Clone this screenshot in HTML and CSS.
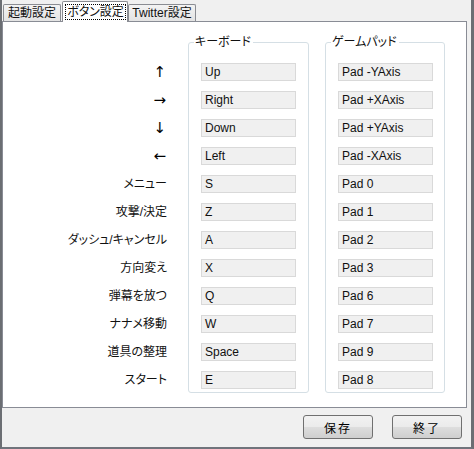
FILE: index.html
```html
<!DOCTYPE html>
<html lang="ja">
<head>
<meta charset="utf-8">
<link rel="stylesheet" href="styles.css">
</head>
<body>
<div class="window">
  <div class="tabs">
    <div class="tab tab-first">起動設定</div>
    <div class="tab tab-active"><span class="focus">ボタン設定</span></div>
    <div class="tab tab-last">Twitter設定</div>
  </div>
  <div class="panel">
    <div class="labels">
      <div class="label arrow">↑</div>
      <div class="label arrow">→</div>
      <div class="label arrow">↓</div>
      <div class="label arrow">←</div>
      <div class="label">メニュー</div>
      <div class="label">攻撃/決定</div>
      <div class="label">ダッシュ/キャンセル</div>
      <div class="label">方向変え</div>
      <div class="label">弾幕を放つ</div>
      <div class="label">ナナメ移動</div>
      <div class="label">道具の整理</div>
      <div class="label">スタート</div>
    </div>
    <div class="group group-key">
      <span class="legend">キーボード</span>
      <div class="field">Up</div>
      <div class="field">Right</div>
      <div class="field">Down</div>
      <div class="field">Left</div>
      <div class="field">S</div>
      <div class="field">Z</div>
      <div class="field">A</div>
      <div class="field">X</div>
      <div class="field">Q</div>
      <div class="field">W</div>
      <div class="field">Space</div>
      <div class="field">E</div>
    </div>
    <div class="group group-pad">
      <span class="legend">ゲームパッド</span>
      <div class="field">Pad -YAxis</div>
      <div class="field">Pad +XAxis</div>
      <div class="field">Pad +YAxis</div>
      <div class="field">Pad -XAxis</div>
      <div class="field">Pad 0</div>
      <div class="field">Pad 1</div>
      <div class="field">Pad 2</div>
      <div class="field">Pad 3</div>
      <div class="field">Pad 6</div>
      <div class="field">Pad 7</div>
      <div class="field">Pad 9</div>
      <div class="field">Pad 8</div>
    </div>
  </div>
  <div class="footer">
    <button class="btn">保存</button>
    <button class="btn">終了</button>
  </div>
</div>
</body>
</html>
```

FILE: styles.css
```css
* { box-sizing: border-box; }
html, body { margin: 0; padding: 0; }
body {
  background: #f0f0f0;
  font-family: "Liberation Sans", "Noto Sans CJK JP", sans-serif;
  font-size: 12px;
  font-feature-settings: "palt";
  color: #111;
}
.window {
  width: 474px;
  height: 449px;
  background: #f0f0f0;
  border-left: 2px solid #6b6e73;
  border-right: 3px solid #6b6e73;
  border-bottom: 2px solid #70747c;
  display: flex;
  flex-direction: column;
}
.tabs {
  height: 21px;
  display: flex;
  align-items: flex-end;
  padding-left: 1px;
}
.tab {
  height: 17px;
  border: 1px solid #8a8c92;
  border-bottom: none;
  background: linear-gradient(#f3f3f3, #e3e3e3);
  display: flex;
  align-items: center;
  justify-content: center;
  line-height: 1;
  border-radius: 2px 2px 0 0;
}
.tab-first { width: 58px; }
.tab-active {
  width: 66px;
  height: 21px;
  margin-left: 1px;
  margin-bottom: -1px;
  background: #fff;
  position: relative;
  z-index: 1;
  padding: 2px 1px 2px 2px;
}
.focus {
  display: flex;
  align-items: center;
  justify-content: center;
  width: 100%;
  height: 100%;
  border: 1px dotted #000;
}
.tab-last { width: 68px; }
.panel {
  width: 465px;
  height: 387px;
  background: #fff;
  border: 1px solid #898c95;
  display: flex;
  align-items: flex-start;
  padding-top: 20px;
}
.labels {
  width: 164px;
  margin-right: 21px;
  padding-top: 21px;
  display: flex;
  flex-direction: column;
  gap: 10px;
}
.label {
  height: 18px;
  line-height: 18px;
  text-align: right;
  white-space: nowrap;
}
.arrow {
  font-family: "DejaVu Sans", sans-serif;
  font-variant-emoji: text;
  font-size: 15px;
  padding-right: 1px;
  color: #000;
}
.group {
  position: relative;
  border: 1px solid #d5dfe5;
  border-radius: 3px;
  height: 351px;
  padding: 20px 12px 0 12px;
  display: flex;
  flex-direction: column;
  gap: 10px;
}
.group-key { width: 121px; }
.group-pad { width: 120px; margin-left: 16px; }
.legend {
  position: absolute;
  top: -9px;
  left: 5px;
  background: #fff;
  padding: 0 2px 0 1px;
  line-height: 16px;
}
.field {
  height: 18px;
  width: 95px;
  background: #f0f0f0;
  border: 1px solid #d9d9d9;
  line-height: 16px;
  padding-left: 3px;
  white-space: nowrap;
}
.footer {
  display: flex;
  justify-content: flex-end;
  gap: 19px;
  padding: 7px 9px 0 0;
}
.btn {
  width: 70px;
  height: 24px;
  border: 1px solid #707070;
  border-radius: 3px;
  background: linear-gradient(#f2f2f2 0%, #ebebeb 48%, #dddddd 52%, #cfcfcf 100%);
  font-family: inherit;
  font-size: 12px;
  font-feature-settings: "palt";
  color: #000;
  padding: 0;
  letter-spacing: 2px;
}
```
